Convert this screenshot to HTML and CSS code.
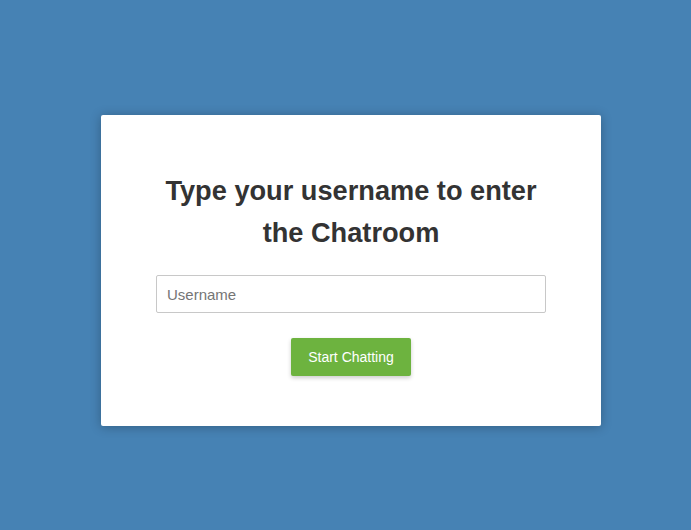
FILE: index.html
```html
<!DOCTYPE html>
<html>
<head>
<meta charset="utf-8">
<link rel="stylesheet" href="styles.css">
</head>
<body>
<div class="page">
  <div class="card">
    <h1 class="title">Type your username to enter the Chatroom</h1>
    <form class="form">
      <input class="field" type="text" placeholder="Username">
      <button class="btn" type="button">Start Chatting</button>
    </form>
  </div>
</div>
</body>
</html>
```
FILE: styles.css
```css
html, body {
  margin: 0;
  padding: 0;
  height: 100%;
}
body {
  background: #4682b4;
  font-family: "Liberation Sans", Arial, sans-serif;
}
.page {
  padding-top: 115px;
  padding-left: 101px;
}
.card {
  width: 500px;
  box-sizing: border-box;
  background: #fff;
  border-radius: 2px;
  box-shadow: 0 1px 11px rgba(0, 0, 0, 0.27);
  padding: 55px 55px 50px;
}
.title {
  margin: 0;
  font-size: 27.2px;
  line-height: 42px;
  font-weight: bold;
  color: #333;
  text-align: center;
  padding: 0 5px;
}
.form {
  margin: 21px 0 0;
  display: flex;
  flex-direction: column;
  align-items: center;
}
.field {
  width: 100%;
  height: 38px;
  box-sizing: border-box;
  border: 1px solid #c8c8c8;
  border-radius: 2px;
  padding: 0 10px;
  font-family: "Liberation Sans", Arial, sans-serif;
  font-size: 15px;
  color: #333;
  outline: none;
}
.field::placeholder {
  color: #757575;
}
.btn {
  margin-top: 25px;
  width: 120px;
  height: 38px;
  border: none;
  border-radius: 2px;
  background: #6db33f;
  color: #fff;
  font-family: "Liberation Sans", Arial, sans-serif;
  font-size: 14px;
  box-shadow: 0 2px 4px rgba(0, 0, 0, 0.2);
  cursor: pointer;
}
```
